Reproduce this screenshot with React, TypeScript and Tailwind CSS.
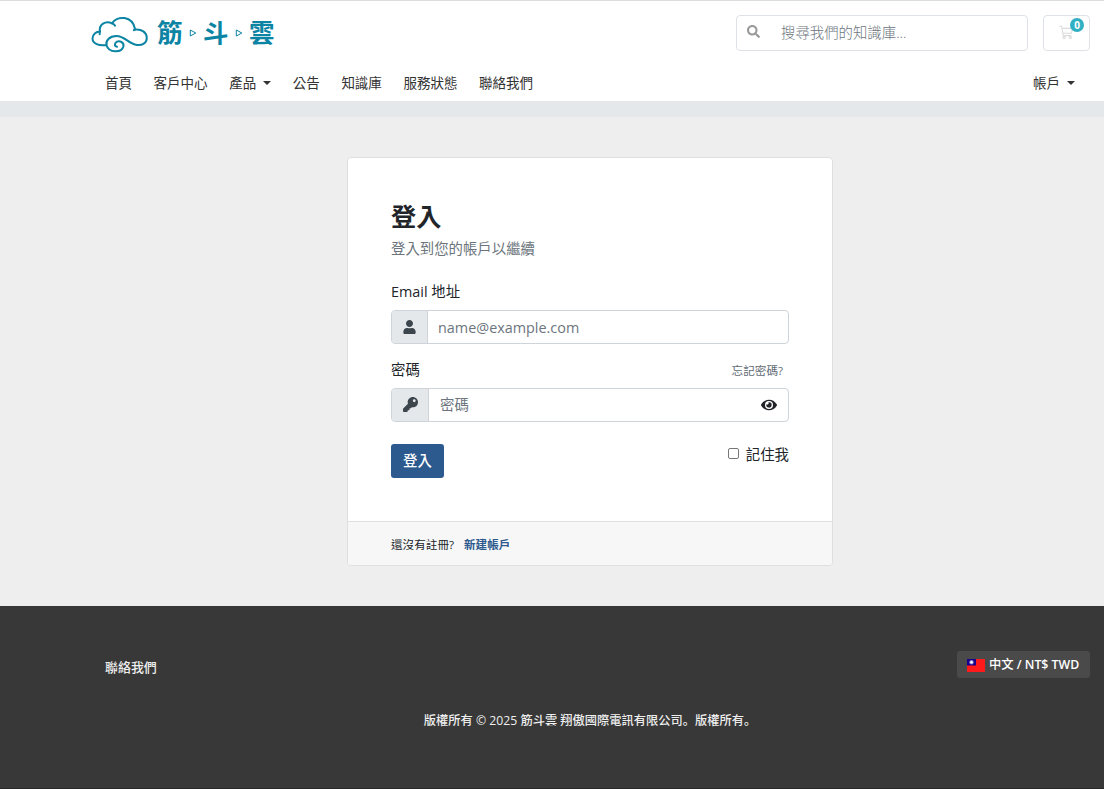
import { useState } from 'react';
import { FaEye, FaKey, FaSearch, FaUser } from 'react-icons/fa';

const navItems = [
  { label: '首頁' },
  { label: '客戶中心' },
  { label: '產品', dropdown: true },
  { label: '公告' },
  { label: '知識庫' },
  { label: '服務狀態' },
  { label: '聯絡我們' }
];

function Caret() {
  return (
    <span className="ml-[7px] inline-block border-x-4 border-t-4 border-x-transparent border-t-[#333] align-[3px]" />
  );
}

function LogoArrow() {
  return (
    <svg viewBox="0 0 8 8" className="h-[8px] w-[8px]" fill="none" stroke="#0c84a3" strokeWidth="1">
      <path d="M1.3 1 6.8 4 1.3 7Z" />
    </svg>
  );
}

function Logo() {
  return (
    <a href="#" className="flex h-[37px] items-center font-bold text-[#0c84a3]">
      <svg
        viewBox="0 0 58 38"
        className="mt-[3px] h-[38px] w-[58px]"
        fill="none"
        stroke="#0c84a3"
        strokeWidth="2"
        strokeLinecap="round"
        strokeLinejoin="round"
      >
        <path d="M15.4 29C8 30 1.5 27.6 1.5 22.6C1.5 18.2 5 15.6 9 15.6C7.6 8.6 14.5 4.2 21 7.4C26-.6 41.6-.8 44.2 13.5C50.5 12.8 55.8 16.5 55.8 22C55.8 27.3 51 29.6 46 29C37.5 28 34 20 25.5 20C18.5 20 14.2 24.8 15.6 29.5C17.8 37 30.6 37.2 32.4 30.5C33.3 26.5 29 24.4 26 25.6C23.2 27 23.2 30.5 26 30.8" />
        <path d="M21 7.4C22.6 8 23.4 8.7 24 9.6M9 15.6C8.6 16.6 8.5 17.4 8.7 18.2M44.2 13.5C43.6 13.6 43.2 13.8 42.8 14.1" />
      </svg>
      <span className="ml-[8px] text-[25.5px] leading-none">筋</span>
      <span className="ml-[6.5px]"><LogoArrow /></span>
      <span className="ml-[6px] text-[25.5px] leading-none">斗</span>
      <span className="ml-[6.5px]"><LogoArrow /></span>
      <span className="ml-[6px] text-[25.5px] leading-none">雲</span>
    </a>
  );
}

function CartIcon() {
  return (
    <svg viewBox="0 0 16 16" className="h-4 w-4" fill="none" stroke="#dcdcdc" strokeWidth="1.1" strokeLinejoin="round">
      <path d="M1.2 1.2h2.4l1.7 9.4h8M3.9 3.4h10.8L13.4 8.3H4.8" />
      <circle cx="6" cy="12.5" r="1.1" />
      <circle cx="12.3" cy="12.5" r="1.1" />
    </svg>
  );
}

function Flag() {
  return (
    <svg viewBox="0 0 18 13" className="mt-[2px] h-[13px] w-[18px]">
      <rect width="18" height="13" fill="#fe1a1a" />
      <rect width="9" height="6.5" fill="#16008c" />
      <circle cx="4.5" cy="3.3" r="2.2" fill="#8c88d0" />
      <circle cx="4.5" cy="3.3" r="1.2" fill="#fff" />
    </svg>
  );
}

function Header() {
  return (
    <header className="h-[101px] border-t border-[#dcdcdc] bg-white">
      <div className="flex h-[64px] items-center pr-[14px] pl-[91px]">
        <Logo />
        <label className="mr-[15px] ml-auto flex h-[36px] w-[292px] items-center rounded-[4px] border border-[#dee2e6]">
          <FaSearch className="mb-[3px] ml-[10px] h-[13px] w-[13px] text-[#999]" />
          <input
            className="ml-[21px] w-[220px] font-light outline-none placeholder:text-[#6c757d]"
            placeholder="搜尋我們的知識庫..."
          />
        </label>
        <button className="relative flex h-[36px] w-[47px] items-center rounded-[4px] border border-[#dee2e6] pl-[14px]">
          <CartIcon />
          <span className="absolute top-[2px] right-[5px] flex h-[14px] w-[14px] items-center justify-center rounded-full bg-[#31b0c3] text-[10px] font-bold text-white">
            0
          </span>
        </button>
      </div>
      <nav className="flex h-[36px] items-center pr-[29px] pl-[105px] text-[13.5px] text-[#333]">
        <ul className="flex gap-[21.6px]">
          {navItems.map((item) => (
            <li key={item.label}>
              <a href="#">
                {item.label}
                {item.dropdown && <Caret />}
              </a>
            </li>
          ))}
        </ul>
        <a href="#" className="ml-auto">
          帳戶
          <Caret />
        </a>
      </nav>
    </header>
  );
}

function LoginCard() {
  const [email, setEmail] = useState('');
  const [password, setPassword] = useState('');
  const [showPassword, setShowPassword] = useState(false);

  return (
    <form className="mr-[271px] ml-auto flex h-[409px] w-[486px] flex-col overflow-hidden rounded-[4px] border border-[#dfdfdf] bg-white">
      <div className="flex-1 px-[43px] pt-[42px]">
        <h1 className="text-[25.2px] leading-[32px] font-bold">登入</h1>
        <p className="mt-[6px] leading-[22px] text-[#6c757d]">登入到您的帳戶以繼續</p>

        <label htmlFor="email" className="mt-[21px] block leading-[22px]">
          Email 地址
        </label>
        <div className="mt-[7px] flex h-[34px] overflow-hidden rounded-[4px] border border-[#ced4da]">
          <span className="flex w-[36px] items-center justify-center border-r border-[#ced4da] bg-[#e4e8eb] text-[#3d464d]">
            <FaUser className="h-[14px] w-[13px]" />
          </span>
          <input
            id="email"
            value={email}
            onChange={(event) => setEmail(event.target.value)}
            className="flex-1 px-[10px] pt-[2px] outline-none placeholder:text-[#6c757d]"
            placeholder="name@example.com"
          />
        </div>

        <div className="mt-[15px] flex h-[22px] items-center justify-between">
          <label htmlFor="password">密碼</label>
          <a href="#" className="mt-[2px] mr-[6px] text-[11.6px] text-[#5f6b74]">
            忘記密碼?
          </a>
        </div>
        <div className="mt-[7px] flex h-[34px] overflow-hidden rounded-[4px] border border-[#ced4da]">
          <span className="flex w-[37px] items-center justify-center border-r border-[#ced4da] bg-[#e4e8eb] text-[#3d464d]">
            <FaKey className="mb-px h-[15px] w-[15px]" />
          </span>
          <input
            id="password"
            type={showPassword ? 'text' : 'password'}
            value={password}
            onChange={(event) => setPassword(event.target.value)}
            className="flex-1 px-[11px] outline-none placeholder:text-[#6c757d]"
            placeholder="密碼"
          />
          <button type="button" onClick={() => setShowPassword(!showPassword)} className="pr-[11px]">
            <FaEye className="h-[16px] w-[16px]" />
          </button>
        </div>

        <div className="mt-[22px] flex items-start justify-between">
          <button
            type="button"
            className="h-[34px] w-[53px] rounded-[3px] bg-[#2c5a8e] font-medium text-white"
          >
            登入
          </button>
          <label className="flex h-[22px] items-center gap-[7px]">
            <input
              type="checkbox"
              className="mb-[3px] h-[11px] w-[11px] appearance-none rounded-[2px] border border-[#767676] checked:bg-[#2c5a8e]"
            />
            記住我
          </label>
        </div>
      </div>
      <div className="flex h-[44px] items-center border-t border-[#dfdfdf] bg-[#f7f7f7] px-[43px] pt-[2px] text-[11.6px]">
        還沒有註冊?
        <a href="#" className="ml-[10px] font-bold text-[#2c5a8e]">
          新建帳戶
        </a>
      </div>
    </form>
  );
}

function Footer() {
  return (
    <footer className="h-[183px] border-b border-[#282828] bg-[#383838] pt-[45px] pr-[14px] pl-[105px] text-[12.96px] font-medium text-[#eee]">
      <div className="flex items-start justify-between">
        <a href="#" className="mt-[6px] leading-[20px]">
          聯絡我們
        </a>
        <button className="flex h-[27px] w-[133px] items-center gap-[4px] rounded-[3px] bg-[#4a4a4a] pl-[10px] text-[12.3px] font-semibold whitespace-nowrap text-white">
          <Flag />
          <span className="mt-[2px] font-medium">中文 <span className="font-semibold">/ NT$ TWD</span></span>
        </button>
      </div>
      <p
        lang="zh-CN"
        className="mt-[33px] -ml-[15px] text-center font-['Open_Sans','Noto_Sans_CJK_SC',sans-serif] text-[12.24px] leading-[20px]"
      >
        版權所有 © 2025 筋斗雲 翔傲國際電訊有限公司。版權所有。
      </p>
    </footer>
  );
}

export default function App() {
  return (
    <div className="h-[789px] overflow-hidden bg-[#eee] font-['Open_Sans','Noto_Sans_CJK_TC',sans-serif] text-[14.4px] text-[#212529]">
      <Header />
      <div className="h-[16px] bg-[#e4e8eb]" />
      <main className="h-[489px] pt-[40px]">
        <LoginCard />
      </main>
      <Footer />
    </div>
  );
}
